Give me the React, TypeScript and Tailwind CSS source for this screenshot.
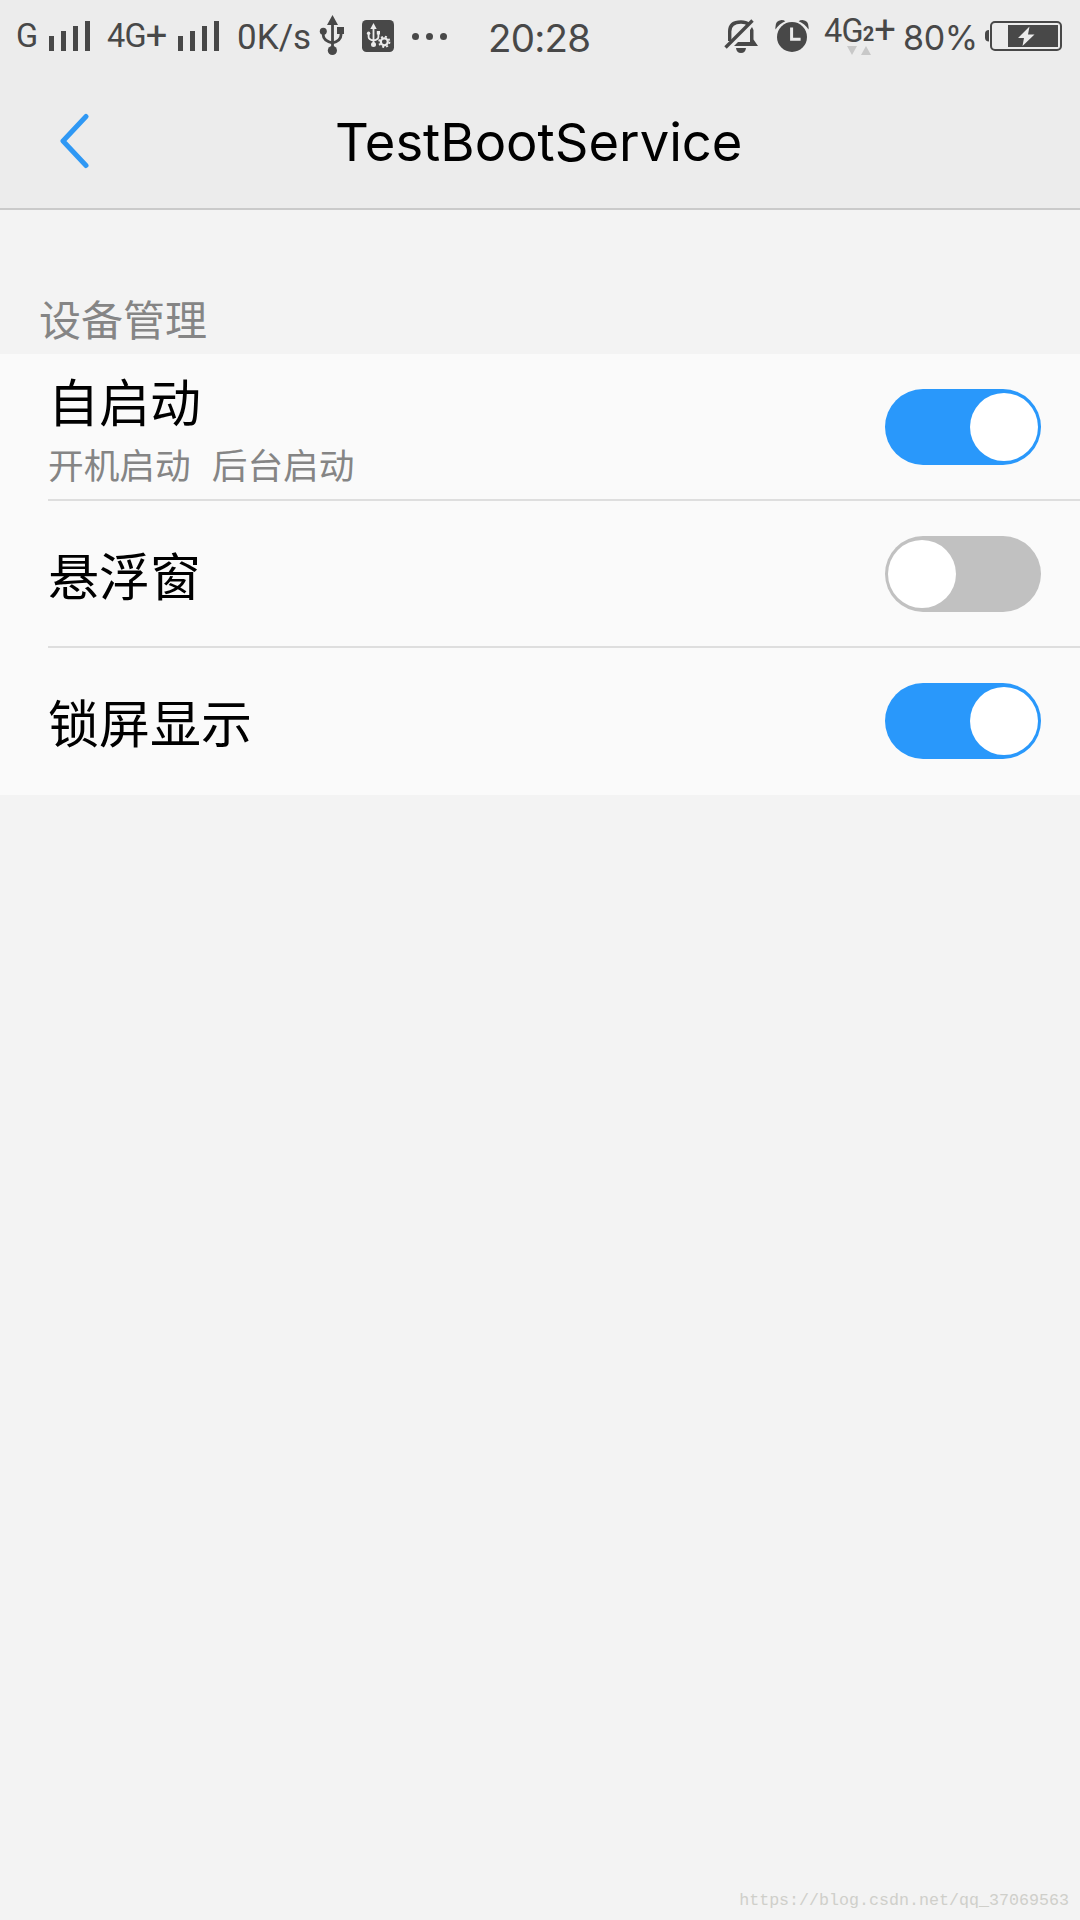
import React, { useState } from "react";

const INK = "#484848";

function Signal() {
  return (
    <svg width="42" height="72" viewBox="0 0 42 72" fill={INK} shapeRendering="crispEdges" className="shrink-0">
      <path d="M0 36h5v15H0zM12 31h5v20h-5zM24 26h5v25h-5zM36 21h5v30h-5z" />
    </svg>
  );
}

function Usb() {
  return (
    <svg width="26" height="72" viewBox="319 0 26 72" className="ml-[8px] shrink-0">
      <path d="M332.5 15l5.5 10h-11zM337 27h7v7h-7z" fill={INK} />
      <circle cx="323.3" cy="31.3" r="3.5" fill={INK} />
      <circle cx="332.4" cy="50.5" r="4.6" fill={INK} />
      <path d="M332.5 22v28M323.3 32v3.5q0 5 9.2 7.5q8.5-2.500 8.500-8V32" fill="none" stroke={INK} strokeWidth="2.8" />
    </svg>
  );
}

function UsbSettings() {
  return (
    <svg width="32" height="72" viewBox="362 0 32 72" className="ml-[17px] shrink-0">
      <rect x="362" y="20" width="32" height="32" rx="4.500" fill={INK} />
      <g fill="#ececec">
        <path d="M373.500 23l3.200 6h-6.400zM376.800 31h3.200v3.500h-3.200z" />
        <circle cx="368.600" cy="33.300" r="1.700" />
        <circle cx="373.500" cy="44.500" r="2.500" />
      </g>
      <path d="M373.500 27v17M368.600 34v3q0 2.500 4.900 3.500q4.900-1 4.900-3.500v-3" fill="none" stroke="#ececec" strokeWidth="1.800" />
      <circle cx="384.300" cy="41.800" r="3.500" fill="none" stroke="#ececec" strokeWidth="2.200" />
      <circle cx="384.300" cy="41.800" r="5.200" fill="none" stroke="#ececec" strokeWidth="1.800" strokeDasharray="2.040 2.040" />
    </svg>
  );
}

function MoreDots() {
  return (
    <svg width="36" height="72" viewBox="411 0 36 72" fill={INK} className="ml-[17px] shrink-0">
      <circle cx="415.500" cy="36.500" r="3.500" />
      <circle cx="429.500" cy="36.500" r="3.500" />
      <circle cx="443.500" cy="36.500" r="3.500" />
    </svg>
  );
}

function BellOff() {
  return (
    <svg width="34" height="72" viewBox="724 0 34 72" className="shrink-0">
      <path d="M729.700 41V31.500q0-9.500 11.300-9.500q5 0 7.500 2.200" fill="none" stroke={INK} strokeWidth="3.400" />
      <path d="M752 27l1.500 3v9.500l4.500 6.500h-24l4-4h12V30z" fill={INK} />
      <path d="M725.500 47.500L752.500 20.500" stroke={INK} strokeWidth="3.400" />
      <path d="M736 48h10q-.5 5-5 5t-5-5z" fill={INK} />
    </svg>
  );
}

function Alarm() {
  return (
    <svg width="34" height="72" viewBox="775 0 34 72" className="ml-[17px] shrink-0">
      <circle cx="792" cy="37" r="15" fill={INK} />
      <path d="M775.500 29.500q-1-9 6-9.500q2.500 0 3.800 1.300q-6 2.500-9.800 8.200zM808.500 29.500q1-9-6-9.500q-2.500 0-3.800 1.300q6 2.500 9.800 8.200z" fill={INK} />
      <path d="M791.600 27.500v11.700h9" fill="none" stroke="#ececec" strokeWidth="3" />
    </svg>
  );
}

function Battery() {
  return (
    <svg width="77" height="72" viewBox="985 0 77 72" className="ml-[10px] shrink-0">
      <path d="M989 30v11.500q-4 0-4-4v-3.500q0-4 4-4z" fill={INK} />
      <rect x="991" y="22" width="70" height="28" rx="4" fill="none" stroke={INK} strokeWidth="2" />
      <path d="M1008 25h50v22h-50z" fill={INK} />
      <path d="M1029.500 26.500L1018 38h6l-1.500 8L1034.500 34.500h-6.500z" fill="#ececec" />
    </svg>
  );
}

function StatusBar() {
  return (
    <div className="flex h-[72px] items-center whitespace-nowrap font-[Roboto,sans-serif] text-[32.5px] leading-[72px] text-[#484848]">
      <span className="ml-[16px] w-[33px] shrink-0">G</span>
      <Signal />
      <span className="ml-[16px] flex w-[71px] shrink-0">
        <span className="tracking-[-0.8px]">4G</span>
        <span className="text-[38px]">+</span>
      </span>
      <Signal />
      <span className="ml-[17px] w-[74px] shrink-0 pt-[3px] text-[35px]">0K/s</span>
      <Usb />
      <UsbSettings />
      <MoreDots />
      <span className="ml-[41px] w-[104px] shrink-0 pt-[3px] font-[Inter,sans-serif] text-[38.5px] tracking-[-0.8px]">20:28</span>
      <div className="flex-1" />
      <BellOff />
      <Alarm />
      <div className="relative ml-[15px] flex h-[72px] w-[72px] shrink-0">
        <span className="relative top-[-5px] tracking-[-0.8px]">4G</span>
        <span className="relative top-[-2px] text-[20px] font-bold">2</span>
        <span className="relative top-[-6px] text-[38px]">+</span>
        <svg width="24" height="9" viewBox="0 0 24 9" fill="#c8c8c8" className="absolute left-[23px] top-[46px]">
          <path d="M0 0h10L5 9zM14 9h10L19 0z" />
        </svg>
      </div>
      <span className="ml-[7px] w-[72px] shrink-0 pt-[3px] font-[Inter,sans-serif] text-[34px] tracking-[-0.4px]">80%</span>
      <Battery />
      <div className="w-[18px] shrink-0" />
    </div>
  );
}

function Toggle({ on, onChange }: { on: boolean; onChange: () => void }) {
  return (
    <button
      role="switch"
      aria-checked={on}
      onClick={onChange}
      className={`mt-[35px] flex h-[76px] w-[156px] shrink-0 items-center rounded-full px-[3px] ${
        on ? "justify-end bg-[#2998fb]" : "justify-start bg-[#c1c1c1]"
      }`}
    >
      <span className="size-[68px] rounded-full bg-white" />
    </button>
  );
}

function Row({ title, details, initial, last }: { title: string; details?: string[]; initial: boolean; last?: boolean }) {
  const [on, setOn] = useState(initial);
  return (
    <div className={`ml-[48px] flex h-[147px] items-start justify-between pr-[39px] ${last ? "" : "border-b-2 border-[#dedede]"}`}>
      <div className={details ? "pt-[16px]" : "pt-[43px]"}>
        <div className="text-[51px] leading-[60px] text-black">{title}</div>
        {details && (
          <div className="mt-[10px] flex gap-[21px] text-[35.7px] leading-[48px] text-[#858585]">
            {details.map((d) => (
              <span key={d}>{d}</span>
            ))}
          </div>
        )}
      </div>
      <Toggle on={on} onChange={() => setOn(!on)} />
    </div>
  );
}

export default function App() {
  return (
    <div className="flex h-[1920px] w-[1080px] flex-col overflow-hidden bg-[#f3f3f3] font-['Noto_Sans_CJK_SC',sans-serif]">
      <header className="h-[210px] border-b-2 border-[#cacaca] bg-[#ececec]">
        <StatusBar />
        <div className="flex h-[136px] items-start">
          <svg width="30" height="56" viewBox="0 0 30 56" fill="none" stroke="#2f98f4" strokeWidth="5" strokeLinecap="round" strokeLinejoin="round" className="ml-[60px] mt-[41px]">
            <path d="M26 3.500L3 28L26 52.500" />
          </svg>
          <h1 className="ml-[245px] mt-[35px] w-[410px] whitespace-nowrap font-[Inter,sans-serif] text-[52.5px] leading-[70px] text-black">TestBootService</h1>
        </div>
      </header>
      <h2 className="flex h-[144px] items-end pb-[8px] pl-[39px] text-[42px] leading-[56px] text-[#858585]">设备管理</h2>
      <section className="bg-[#fafafa]">
        <Row title="自启动" details={["开机启动", "后台启动"]} initial />
        <Row title="悬浮窗" initial={false} />
        <Row title="锁屏显示" initial last />
      </section>
      <footer className="mt-auto flex justify-end pb-[8px] pr-[11px] font-['Liberation_Mono',monospace] text-[16.67px] leading-[22px] text-[#cfcfca]">
        https://blog.csdn.net/qq_37069563
      </footer>
    </div>
  );
}
